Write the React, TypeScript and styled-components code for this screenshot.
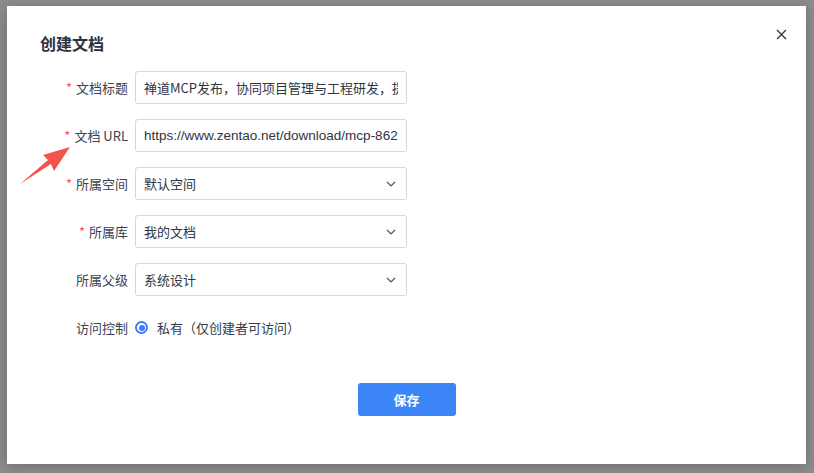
import styled, { createGlobalStyle } from "styled-components"

const GlobalStyle = createGlobalStyle`
  html, body {
    margin: 0;
    padding: 0;
    background: #8e8e8e;
  }
  body {
    font-family: "Noto Sans CJK SC", "Noto Sans", "Liberation Sans", sans-serif;
    color: #313c52;
  }
`

const Backdrop = styled.div`
  width: 814px;
  height: 473px;
  padding: 6px 0 0 7px;
  box-sizing: border-box;
  position: relative;
`

const Modal = styled.div`
  position: relative;
  width: 799px;
  height: 458px;
  background: #fff;
  box-shadow: 0 2px 14px rgba(0, 0, 0, 0.25);
  padding: 24px 33px 0;
  box-sizing: border-box;
  display: flex;
  flex-direction: column;
`

const Title = styled.h2`
  margin: 0;
  font-size: 16px;
  font-weight: 700;
  line-height: 26px;
  color: #2b3141;
`

const CloseButton = styled.button`
  position: absolute;
  top: 16px;
  right: 13px;
  width: 24px;
  height: 24px;
  padding: 0;
  border: none;
  background: none;
  display: flex;
  align-items: center;
  justify-content: center;
  cursor: pointer;
`

const Form = styled.div`
  margin-top: 15px;
  display: flex;
  flex-direction: column;
  gap: 15px;
`

const Row = styled.div`
  display: flex;
  align-items: center;
  gap: 7px;
  height: 33px;
`

const Label = styled.label<{ $required?: boolean }>`
  width: 88px;
  flex: none;
  text-align: right;
  font-size: 13px;
  color: #3a4253;
  white-space: nowrap;

  &::before {
    content: ${p => (p.$required ? "'*'" : "none")};
    color: #f2584f;
    margin-right: 4px;
  }
`

const Field = styled.div`
  width: 272px;
  height: 33px;
  box-sizing: border-box;
  border: 1px solid #d3d7e1;
  border-radius: 3px;
  padding: 0 8px;
  display: flex;
  align-items: center;
  font-size: 13px;
  color: #2f3545;
  overflow: hidden;
  white-space: nowrap;
`

const FieldText = styled.span`
  flex: 1;
  overflow: hidden;
`

const UrlText = styled(FieldText)`
  font-family: "Liberation Sans", "Noto Sans CJK SC", sans-serif;
  font-size: 13.5px;
`

const Chevron = styled.svg`
  flex: none;
  margin-right: 2px;
`

const Radio = styled.span`
  width: 13px;
  height: 13px;
  box-sizing: border-box;
  border-radius: 50%;
  border: 2px solid #3a7ff5;
  display: flex;
  align-items: center;
  justify-content: center;

  &::after {
    content: "";
    width: 6px;
    height: 6px;
    border-radius: 50%;
    background: #3a7ff5;
  }
`

const RadioText = styled.span`
  font-size: 13px;
  color: #333b4c;
  margin-left: 2px;
`

const Footer = styled.div`
  display: flex;
  justify-content: center;
  margin-top: 39px;
`

const SaveButton = styled.button`
  width: 98px;
  height: 33px;
  border: none;
  border-radius: 3px;
  background: #3b85f7;
  color: #fff;
  font-family: inherit;
  font-size: 13px;
  font-weight: 600;
  cursor: pointer;
`

// red pointer arrow drawn on top of the dialog
const Pointer = styled.svg`
  position: absolute;
  left: 0;
  top: 0;
  pointer-events: none;
`

const ChevronDown = () => (
  <Chevron width="10" height="6" viewBox="0 0 10 6">
    <path d="M1 1 L5 5 L9 1" fill="none" stroke="#4a5163" strokeWidth="1.2" />
  </Chevron>
)

const Select = ({ value }: { value: string }) => (
  <Field>
    <FieldText>{value}</FieldText>
    <ChevronDown />
  </Field>
)

export default function App() {
  return (
    <>
      <GlobalStyle />
      <Backdrop>
        <Modal>
          <Title>创建文档</Title>
          <CloseButton aria-label="关闭">
            <svg width="11" height="11" viewBox="0 0 11 11">
              <path d="M1 1 L10 10 M10 1 L1 10" stroke="#2b3141" strokeWidth="1.3" />
            </svg>
          </CloseButton>
          <Form>
            <Row>
              <Label $required>文档标题</Label>
              <Field>
                <FieldText>禅道MCP发布，协同项目管理与工程研发，提升效率</FieldText>
              </Field>
            </Row>
            <Row>
              <Label $required>文档 URL</Label>
              <Field>
                <UrlText>https://www.zentao.net/download/mcp-86235.html</UrlText>
              </Field>
            </Row>
            <Row>
              <Label $required>所属空间</Label>
              <Select value="默认空间" />
            </Row>
            <Row>
              <Label $required>所属库</Label>
              <Select value="我的文档" />
            </Row>
            <Row>
              <Label>所属父级</Label>
              <Select value="系统设计" />
            </Row>
            <Row>
              <Label>访问控制</Label>
              <Radio />
              <RadioText>私有（仅创建者可访问）</RadioText>
            </Row>
          </Form>
          <Footer>
            <SaveButton>保存</SaveButton>
          </Footer>
        </Modal>
        <Pointer width="814" height="473" viewBox="0 0 814 473">
          <polygon
            points="70,147 43,155 48,160 20,184 51,164 54,171"
            fill="#f5524e"
          />
        </Pointer>
      </Backdrop>
    </>
  )
}
